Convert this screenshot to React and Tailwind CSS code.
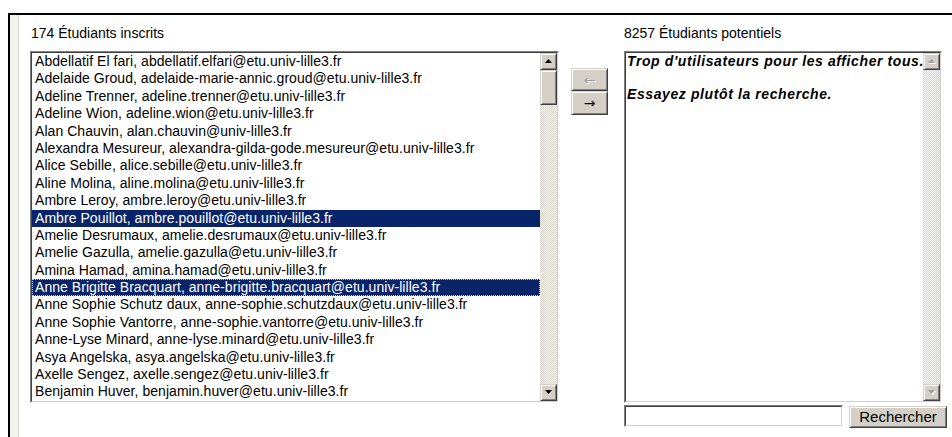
import React from "react";

const enrolled = [
  { label: "Abdellatif El fari, abdellatif.elfari@etu.univ-lille3.fr" },
  { label: "Adelaide Groud, adelaide-marie-annic.groud@etu.univ-lille3.fr" },
  { label: "Adeline Trenner, adeline.trenner@etu.univ-lille3.fr" },
  { label: "Adeline Wion, adeline.wion@etu.univ-lille3.fr" },
  { label: "Alan Chauvin, alan.chauvin@univ-lille3.fr" },
  { label: "Alexandra Mesureur, alexandra-gilda-gode.mesureur@etu.univ-lille3.fr" },
  { label: "Alice Sebille, alice.sebille@etu.univ-lille3.fr" },
  { label: "Aline Molina, aline.molina@etu.univ-lille3.fr" },
  { label: "Ambre Leroy, ambre.leroy@etu.univ-lille3.fr" },
  { label: "Ambre Pouillot, ambre.pouillot@etu.univ-lille3.fr", selected: true },
  { label: "Amelie Desrumaux, amelie.desrumaux@etu.univ-lille3.fr" },
  { label: "Amelie Gazulla, amelie.gazulla@etu.univ-lille3.fr" },
  { label: "Amina Hamad, amina.hamad@etu.univ-lille3.fr" },
  { label: "Anne Brigitte Bracquart, anne-brigitte.bracquart@etu.univ-lille3.fr", selected: true, focused: true },
  { label: "Anne Sophie Schutz daux, anne-sophie.schutzdaux@etu.univ-lille3.fr" },
  { label: "Anne Sophie Vantorre, anne-sophie.vantorre@etu.univ-lille3.fr" },
  { label: "Anne-Lyse Minard, anne-lyse.minard@etu.univ-lille3.fr" },
  { label: "Asya Angelska, asya.angelska@etu.univ-lille3.fr" },
  { label: "Axelle Sengez, axelle.sengez@etu.univ-lille3.fr" },
  { label: "Benjamin Huver, benjamin.huver@etu.univ-lille3.fr" },
];

// classic raised 3d bevel
const raised =
  "border border-t-[#d4d0c8] border-l-[#d4d0c8] border-r-[#404040] border-b-[#404040] shadow-[inset_1px_1px_#ffffff,inset_-1px_-1px_#808080] bg-[#d4d0c8]";

function Arrow({ up, disabled }) {
  const fill = disabled ? "#a0a0a0" : "#000000";
  return (
    <svg width="8" height="5" viewBox="0 0 8 5">
      {disabled && (
        <polygon points={up ? "1,5 4.5,1 8,5" : "1,1 8,1 4.5,5"} fill="#ffffff" />
      )}
      <polygon points={up ? "0,4 3.5,0 7,4" : "0,0 7,0 3.5,4"} fill={fill} />
    </svg>
  );
}

function ScrollBar({ disabled }) {
  return (
    <div className="w-[17px] h-full shrink-0 flex flex-col bg-[repeating-conic-gradient(#d4d0c8_0%_25%,#ffffff_0%_50%)] bg-[length:2px_2px]">
      <div className={`${raised} h-[17px] flex items-center justify-center`}>
        <Arrow up disabled={disabled} />
      </div>
      {!disabled && <div className={`${raised} h-[35px]`}></div>}
      <div className="flex-1"></div>
      <div className={`${raised} h-[17px] flex items-center justify-center`}>
        <Arrow disabled={disabled} />
      </div>
    </div>
  );
}

function Sunken({ className, children }) {
  return (
    <div
      className={`shrink-0 border border-t-[#808080] border-l-[#808080] border-r-white border-b-white ${className}`}
    >
      <div className="w-full h-full border border-t-[#404040] border-l-[#404040] border-r-[#d4d0c8] border-b-[#d4d0c8] bg-white flex">
        {children}
      </div>
    </div>
  );
}

export default function App() {
  return (
    <div className="h-screen flex flex-col pt-[13px] pl-[8px] bg-white font-['Liberation_Sans',Arial,sans-serif] text-black">
      <div className="flex-1 flex border-t-2 border-l-2 border-black">
        {/* left gutter */}
        <div className="w-[9px] shrink-0 bg-[#f4f2ec] border-r border-[#dcdad4]"></div>

        <div className="flex pl-[11px] pt-[11px]">
          {/* enrolled students */}
          <div className="flex flex-col shrink-0">
            <div className="h-[14px] leading-[14px] text-[14px] mb-[11px] pl-[1px]">
              174 Étudiants inscrits
            </div>
            <Sunken className="w-[529px] h-[352px]">
              <div className="flex-1 overflow-hidden">
                {enrolled.map((row, i) => (
                  <div
                    key={i}
                    className={`h-[17.4px] leading-[17.4px] text-[14px] tracking-[0.05px] pl-[3px] whitespace-nowrap ${
                      row.selected ? "bg-[#0a246a] text-white" : ""
                    } ${row.focused ? "outline-1 outline-dotted outline-[#d8cf9a] -outline-offset-1" : ""}`}
                  >
                    {row.label}
                  </div>
                ))}
              </div>
              <ScrollBar />
            </Sunken>
          </div>

          {/* move buttons */}
          <div className="flex flex-col shrink-0 pt-[42px] ml-[12px]">
            <button
              className={`${raised} w-[37px] h-[23px] flex items-center justify-center font-['DejaVu_Sans',sans-serif] text-[14px] leading-none text-[#a0a0a0] [text-shadow:1px_1px_#ffffff]`}
            >
              ←
            </button>
            <button
              className={`${raised} w-[37px] h-[24px] flex items-center justify-center font-['DejaVu_Sans',sans-serif] text-[14px] leading-none`}
            >
              →
            </button>
          </div>

          {/* potential students */}
          <div className="flex flex-col shrink-0 ml-[16px]">
            <div className="h-[14px] leading-[14px] text-[14px] mb-[11px]">
              8257 Étudiants potentiels
            </div>
            <Sunken className="w-[318px] h-[352px]">
              <div className="flex-1 overflow-hidden pl-[1px] text-[14px] font-bold italic tracking-[0.6px] whitespace-nowrap">
                <p className="leading-[17px]">
                  Trop d'utilisateurs pour les afficher tous.
                </p>
                <p className="leading-[17px] mt-[16px]">
                  Essayez plutôt la recherche.
                </p>
              </div>
              <ScrollBar disabled />
            </Sunken>
            <div className="flex items-start mt-[2px] w-[330px]">
              <Sunken className="w-[219px] h-[22px]">
                <input className="w-full h-full outline-none text-[13px] px-[2px]" />
              </Sunken>
              <button
                className={`${raised} shrink-0 ml-[6px] mt-[1px] w-[98px] h-[22px] text-[15px] flex items-center justify-center`}
              >
                Rechercher
              </button>
            </div>
          </div>
        </div>
      </div>
    </div>
  );
}
